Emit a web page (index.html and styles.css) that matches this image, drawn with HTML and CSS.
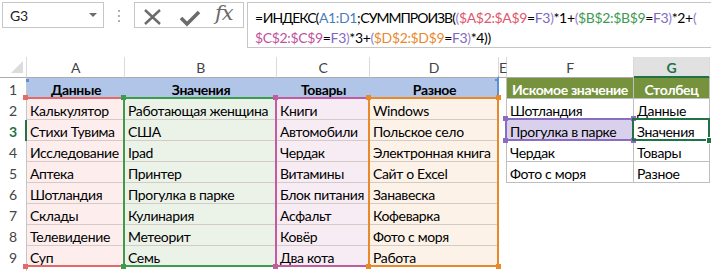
FILE: index.html
```html
<!DOCTYPE html>
<html lang="ru">
<head>
  <meta charset="UTF-8" />
  <title>ИНДЕКС и СУММПРОИЗВ</title>
  <link rel="stylesheet" href="styles.css">
</head>
<body>

  <div class="formula-bar">
    <div class="name-box">G3<span class="dd"></span></div>
    <div class="grip"><span></span><span></span><span></span></div>
    <div class="fx-buttons">
      <svg width="108" height="24" viewBox="0 0 108 24">
        <path d="M10 7 L25 21 M25 7 L10 21" stroke="#6b6b6b" stroke-width="2.4" fill="none" />
        <path d="M46 15 L52 21 L64 9" stroke="#6b6b6b" stroke-width="3.6" fill="none" />
      </svg>
      <i class="fx">fx</i>
    </div>
    <div class="formula">=<span class="fn">ИНДЕКС</span>(<span class="r-blue">A1:D1</span>;<span class="fn">СУММПРОИЗВ</span>(<span class="p">(</span><span class="r-red">$A$2:$A$9</span>=<span class="r-f">F3</span><span class="p">)</span>*1+<span class="p">(</span><span class="r-green">$B$2:$B$9</span>=<span class="r-f">F3</span><span class="p">)</span>*2+<span class="p">(</span><br><span class="r-pink">$C$2:$C$9</span>=<span class="r-f">F3</span><span class="p">)</span>*3+<span class="p">(</span><span class="r-orange">$D$2:$D$9</span>=<span class="r-f">F3</span><span class="p">)</span>*4))</div>
  </div>

  <div class="sheet">
    <!-- column headers -->
    <div class="ch corner"></div>
    <div class="ch">A</div>
    <div class="ch">B</div>
    <div class="ch">C</div>
    <div class="ch">D</div>
    <div class="ch">E</div>
    <div class="ch">F</div>
    <div class="ch sel">G</div>

    <!-- row 1 -->
    <div class="rh">1</div>
    <div class="c hd">Данные</div>
    <div class="c hd">Значения</div>
    <div class="c hd">Товары</div>
    <div class="c hd">Разное</div>
    <div class="c el"></div>
    <div class="c th">Искомое значение</div>
    <div class="c th">Столбец</div>

    <!-- row 2 -->
    <div class="rh">2</div>
    <div class="c fa">Калькулятор</div>
    <div class="c fb">Работающая женщина</div>
    <div class="c fc">Книги</div>
    <div class="c fd">Windows</div>
    <div class="c el"></div>
    <div class="c tf">Шотландия</div>
    <div class="c tf">Данные</div>

    <!-- row 3 -->
    <div class="rh sel">3</div>
    <div class="c fa">Стихи Тувима</div>
    <div class="c fb">США</div>
    <div class="c fc">Автомобили</div>
    <div class="c fd">Польское село</div>
    <div class="c el"></div>
    <div class="c tf pick">Прогулка в парке</div>
    <div class="c tf">Значения</div>

    <!-- row 4 -->
    <div class="rh">4</div>
    <div class="c fa">Исследование</div>
    <div class="c fb">Ipad</div>
    <div class="c fc">Чердак</div>
    <div class="c fd">Электронная книга</div>
    <div class="c el"></div>
    <div class="c tf">Чердак</div>
    <div class="c tf">Товары</div>

    <!-- row 5 -->
    <div class="rh">5</div>
    <div class="c fa">Аптека</div>
    <div class="c fb">Принтер</div>
    <div class="c fc">Витамины</div>
    <div class="c fd">Сайт о Excel</div>
    <div class="c el"></div>
    <div class="c tf">Фото с моря</div>
    <div class="c tf">Разное</div>

    <!-- row 6 -->
    <div class="rh">6</div>
    <div class="c fa">Шотландия</div>
    <div class="c fb">Прогулка в парке</div>
    <div class="c fc">Блок питания</div>
    <div class="c fd">Занавеска</div>
    <div class="c"></div>
    <div class="c"></div>
    <div class="c"></div>

    <!-- row 7 -->
    <div class="rh">7</div>
    <div class="c fa">Склады</div>
    <div class="c fb">Кулинария</div>
    <div class="c fc">Асфальт</div>
    <div class="c fd">Кофеварка</div>
    <div class="c"></div>
    <div class="c"></div>
    <div class="c"></div>

    <!-- row 8 -->
    <div class="rh">8</div>
    <div class="c fa">Телевидение</div>
    <div class="c fb">Метеорит</div>
    <div class="c fc">Ковёр</div>
    <div class="c fd">Фото с моря</div>
    <div class="c"></div>
    <div class="c"></div>
    <div class="c"></div>

    <!-- row 9 -->
    <div class="rh">9</div>
    <div class="c fa">Суп</div>
    <div class="c fb">Семь</div>
    <div class="c fc">Два кота</div>
    <div class="c fd">Работа</div>
    <div class="c"></div>
    <div class="c"></div>
    <div class="c"></div>

    <!-- what is left of row 10 -->
    <div class="rh"></div>
    <div class="c"></div>
    <div class="c"></div>
    <div class="c"></div>
    <div class="c"></div>
    <div class="c"></div>
    <div class="c"></div>
    <div class="c"></div>

    <!-- formula reference highlights -->
    <div class="rng rng-blue"><i class="k tl"></i><i class="k tr"></i></div>
    <div class="rng rng-red"><i class="k tl"></i><i class="k bl"></i></div>
    <div class="rng rng-green"><i class="k tl"></i><i class="k bl"></i></div>
    <div class="rng rng-pink"><i class="k tl"></i><i class="k bl"></i></div>
    <div class="rng rng-orange"><i class="k tl"></i><i class="k tr"></i><i class="k bl"></i><i class="k br"></i></div>
    <div class="rng rng-f"><i class="k tl"></i><i class="k tr"></i><i class="k bl"></i><i class="k br"></i></div>
    <div class="rng active"><i class="k br"></i></div>
  </div>

</body>
</html>
```

FILE: styles.css
```css
* {
  margin: 0;
  padding: 0;
  box-sizing: border-box;
}

html, body {
  height: 100%;
  background-color: #fff;
  font-family: Lato, 'Liberation Sans', sans-serif;
  font-size: 14px;
  letter-spacing: -0.35px;
  color: #000;
  overflow: hidden;
}

/* ---------- formula bar ---------- */

.formula-bar {
  display: flex;
  height: 48px;
  padding-top: 2px;
}

.name-box {
  flex-shrink: 0;
  margin-left: 2px;
  width: 102px;
  height: 26px;
  border: 1px solid #c6c6c6;
  display: flex;
  align-items: center;
  justify-content: space-between;
  padding: 0 6px 0 7px;
  color: #222;
}

.dd {
  border-left: 4px solid transparent;
  border-right: 4px solid transparent;
  border-top: 4px solid #6b6b6b;
}

.grip {
  flex-shrink: 0;
  width: 30px;
  display: flex;
  flex-direction: column;
  align-items: center;
  gap: 3px;
  padding-top: 8px;
}

.grip span {
  width: 2px;
  height: 2px;
  background-color: #b0b0b0;
}

.fx-buttons {
  flex-shrink: 0;
  position: relative;
  width: 110px;
  height: 26px;
  border: 1px solid #c6c6c6;
}

.fx-buttons svg {
  display: block;
}

.fx {
  position: absolute;
  left: 80px;
  top: -2px;
  font-family: 'DejaVu Serif', 'Liberation Serif', serif;
  font-size: 21px;
  color: #6b6b6b;
  letter-spacing: -1px;
}

.formula {
  margin-left: 3px;
  flex: 1;
  min-width: 0;
  height: 46px;
  border: 1px solid #c6c6c6;
  border-right: none;
  padding: 5px 0 0 7px;
  line-height: 20px;
  white-space: nowrap;
}

.fn {
  letter-spacing: -1px;
}

.r-blue   { color: #4a7ebb; }
.r-red    { color: #e0566a; }
.r-green  { color: #3d9a4f; }
.r-pink   { color: #c0509d; }
.r-orange { color: #e8892f; }
.r-f      { color: #8067c0; }
.p        { color: #9b7fd0; }

/* ---------- sheet ---------- */

.sheet {
  position: relative;
  margin-top: 9px;
  display: grid;
  grid-template-columns: 27px 98px 152px 93px 129px 8px 127px 76px;
  grid-template-rows: repeat(10, 21px) 8px;
}

.ch {
  text-align: center;
  color: #444;
  line-height: 20px;
  padding-top: 1px;
  border-right: 1px solid #dadada;
  border-bottom: 1px solid #ababab;
}

.ch.sel {
  background-color: #e1e1e1;
  color: #217346;
  font-weight: bold;
  border-bottom-color: #217346;
  box-shadow: inset 0 -1px 0 #217346;
}

.corner {
  position: relative;
}

.corner::after {
  content: '';
  position: absolute;
  right: 3px;
  bottom: 4px;
  border-left: 12px solid transparent;
  border-bottom: 12px solid #dcdcdc;
}

.rh {
  text-align: center;
  color: #444;
  line-height: 20px;
  padding-top: 2px;
  border-right: 1px solid #c6c6c6;
}

.rh.sel {
  color: #217346;
  font-weight: bold;
  border-right-color: #217346;
  box-shadow: inset -1px 0 0 #217346;
}

.c {
  line-height: 20px;
  padding: 2px 3px 0;
  white-space: nowrap;
}

.hd {
  background-color: #b0c5e7;
  font-weight: bold;
  text-align: center;
}

.fa, .fb, .fc, .fd {
  border-bottom: 1px solid #d2cbc6;
  border-right: 1px solid #d2cbc6;
}

.fa { background-color: #fdeded; }
.fb { background-color: #ebf3e8; }
.fc { background-color: #f8ecf4; }
.fd { background-color: #fdf2e7; }

.el {
  border-right: 1px solid #bfbfbf;
}

.th {
  background-color: #76923c;
  color: #fff;
  font-weight: bold;
  text-align: center;
  border-right: 1px solid #bfbfbf;
  border-bottom: 1px solid #bfbfbf;
}

.tf {
  border-right: 1px solid #bfbfbf;
  border-bottom: 1px solid #bfbfbf;
}

.tf.pick {
  background-color: #d9d0ec;
}

/* ---------- range highlights (over the grid) ---------- */

.rng {
  position: absolute;
  border: 2px solid;
}

.rng-blue   { left: 25px;  top: 19px; width: 474px; height: 23px; border-color: transparent #5b8fd6 #5b8fd6 transparent; }
.rng-red    { left: 25px;  top: 40px; width: 100px; height: 170px; border-color: #e46a6a #e46a6a #e46a6a transparent; }
.rng-green  { left: 123px; top: 40px; width: 154px; height: 170px; border-color: #3c9c4c; }
.rng-pink   { left: 275px; top: 40px; width: 95px;  height: 170px; border-color: #c25ba0; }
.rng-orange { left: 368px; top: 40px; width: 131px; height: 170px; border-color: #e88a2c; }
.rng-f      { left: 505px; top: 61px; width: 129px; height: 23px;  border-color: #8a6cc0; }
.active     { left: 632px; top: 61px; width: 78px;  height: 23px;  border-color: #217346; }

.k {
  position: absolute;
  width: 5px;
  height: 5px;
}

.k.tl { left: -4px;  top: -4px; }
.k.tr { right: -4px; top: -4px; }
.k.bl { left: -4px;  bottom: -4px; }
.k.br { right: -4px; bottom: -4px; }

.rng-blue .k   { background-color: #5b8fd6; width: 3px; height: 3px; }
.rng-blue .k.tl { left: -1px; top: 1px; }
.rng-blue .k.tr { right: -2px; top: 1px; width: 4px; height: 2px; }
.rng-red .k    { background-color: #e46a6a; }
.rng-green .k  { background-color: #3c9c4c; }
.rng-pink .k   { background-color: #c25ba0; }
.rng-orange .k { background-color: #e88a2c; }
.rng-f .k      { background-color: #8a6cc0; }

.active .k.br {
  width: 7px;
  height: 7px;
  right: -5px;
  bottom: -5px;
  background-color: #217346;
  border: 1px solid #fff;
}
```
